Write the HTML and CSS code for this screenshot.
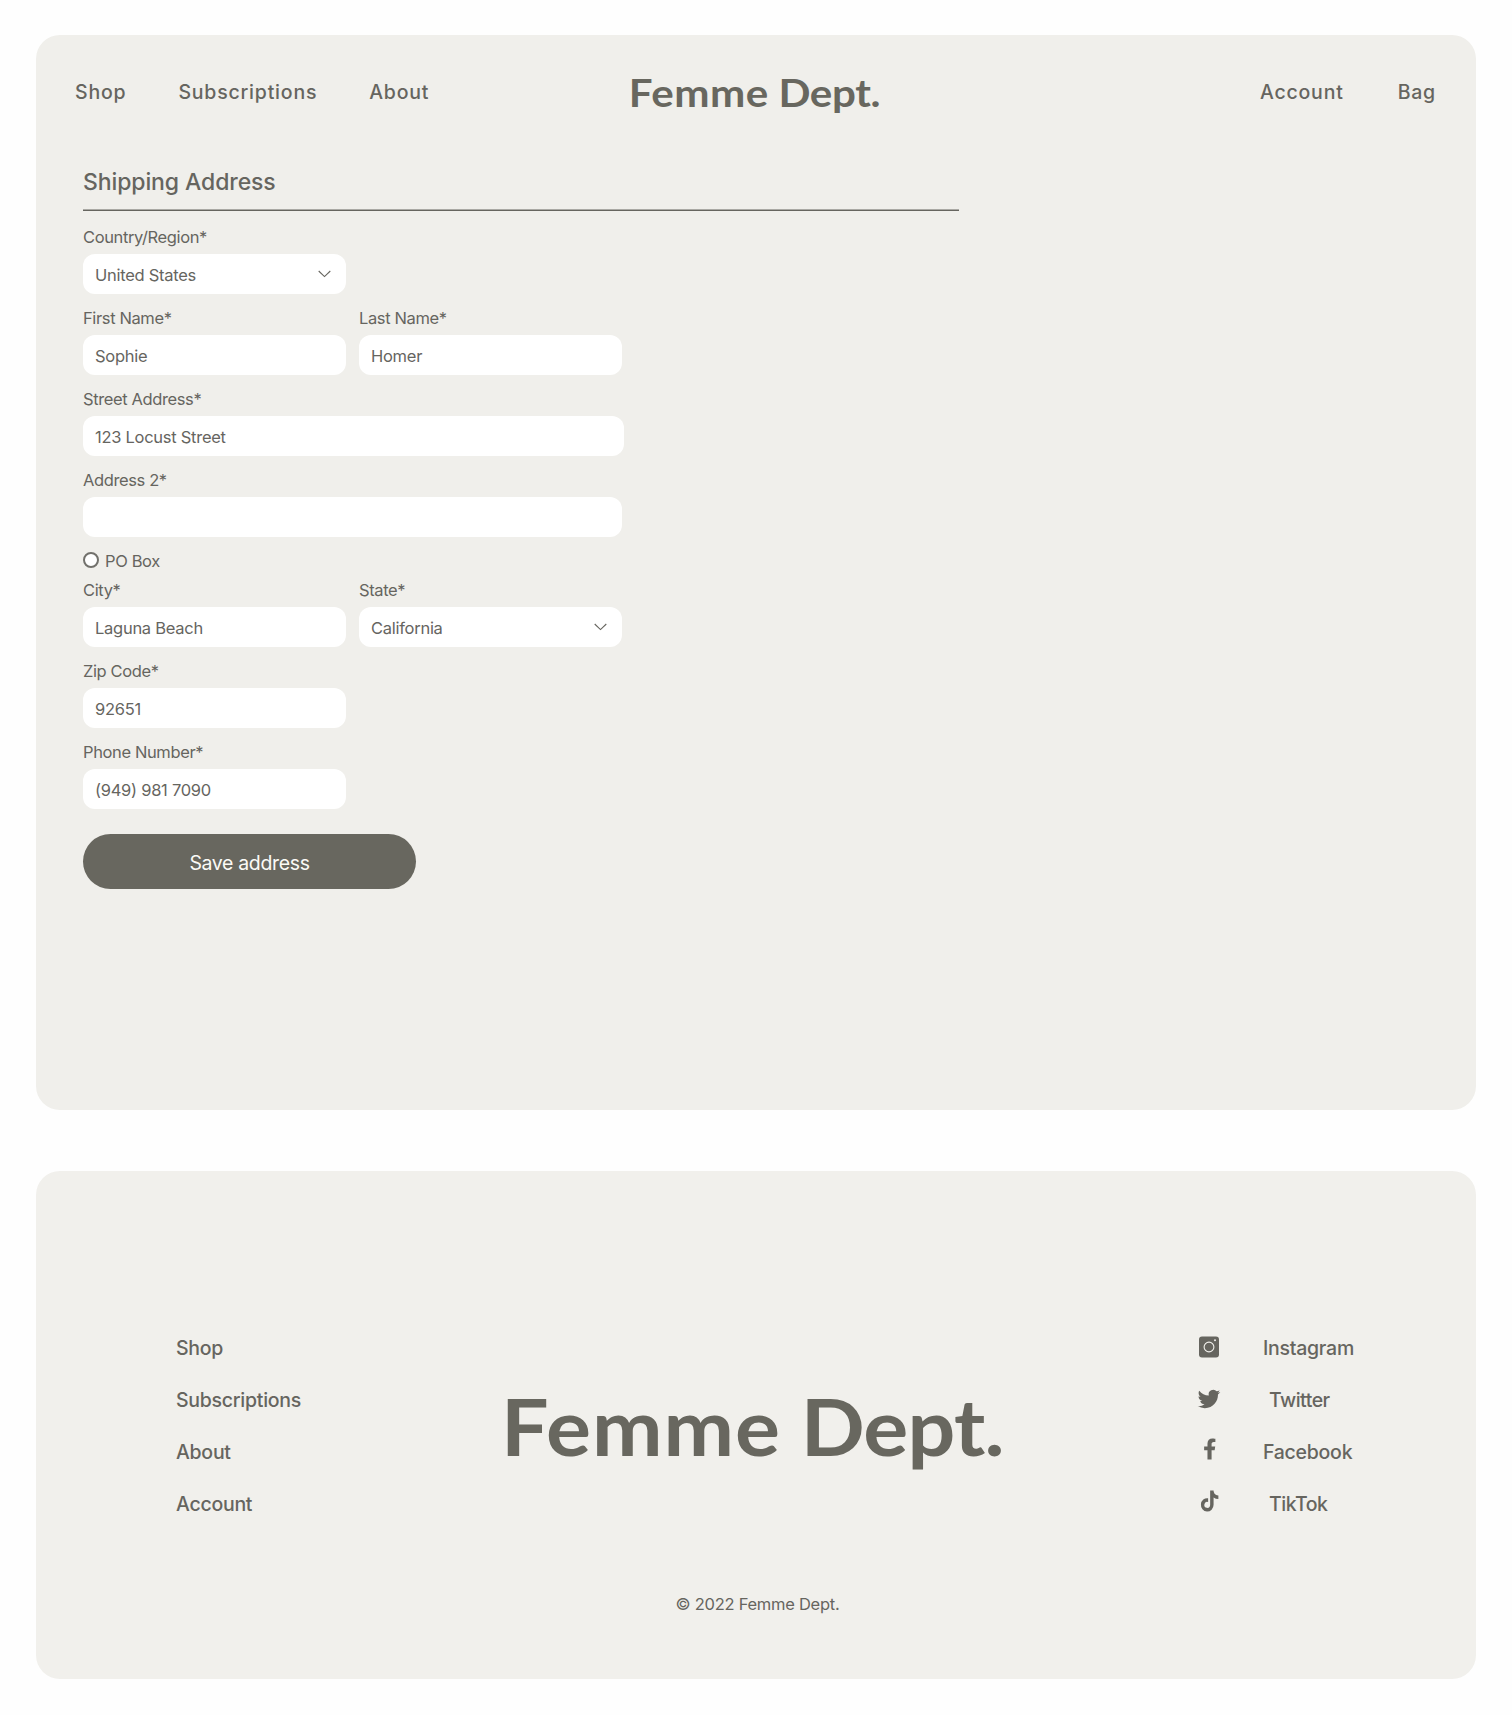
FILE: index.html
```html
<!DOCTYPE html>
<html lang="en">
<head>
<meta charset="utf-8">
<title>Femme Dept. – Shipping Address</title>
<link rel="stylesheet" href="styles.css">
</head>
<body>
<main class="panel">
  <header class="header">
    <nav class="nav"><a>Shop</a><a>Subscriptions</a><a>About</a></nav>
    <div class="logo"><span class="logo-wide">Femme</span> <span>Dept.</span></div>
    <nav class="nav nav-end"><a>Account</a><a>Bag</a></nav>
  </header>
  <form class="form">
    <h1 class="title">Shipping Address</h1>
    <div class="row">
      <label class="field">Country/Region*
        <span class="select"><select class="input"><option>United States</option></select><svg class="chevron" viewBox="0 0 13 8"><path d="M.7 1 6.5 6.6 12.3 1"/></svg></span>
      </label>
    </div>
    <div class="row">
      <label class="field">First Name*<input class="input" value="Sophie"></label>
      <label class="field">Last Name*<input class="input" value="Homer"></label>
    </div>
    <label class="field field-street">Street Address*<input class="input" value="123 Locust Street"></label>
    <label class="field field-wide">Address 2*<input class="input" value=""></label>
    <label class="radio"><input class="radio-dot" type="radio">PO Box</label>
    <div class="row">
      <label class="field">City*<input class="input" value="Laguna Beach"></label>
      <label class="field">State*
        <span class="select"><select class="input"><option>California</option></select><svg class="chevron" viewBox="0 0 13 8"><path d="M.7 1 6.5 6.6 12.3 1"/></svg></span>
      </label>
    </div>
    <label class="field">Zip Code*<input class="input" value="92651"></label>
    <label class="field">Phone Number*<input class="input" value="(949) 981 7090"></label>
    <button class="save" type="button">Save address</button>
  </form>
</main>
<footer class="panel footer">
  <div class="footer-main">
    <nav class="links"><a>Shop</a><a>Subscriptions</a><a>About</a><a>Account</a></nav>
    <div class="logo logo-large"><span class="logo-wide">Femme</span> <span>Dept.</span></div>
    <nav class="links social">
      <a><svg class="icon" viewBox="0 0 24 24"><rect x="2" y="1.5" width="20" height="21" rx="3"/><circle class="lens" cx="12" cy="12" r="4.9"/><circle class="flash" cx="18" cy="5.3" r="1"/></svg>Instagram</a>
      <a class="inset"><svg class="icon" viewBox="0 0 24 24"><path transform="translate(.7 .7) scale(.94)" d="M23.953 4.57a10 10 0 0 1-2.825.775 4.958 4.958 0 0 0 2.163-2.723c-.951.555-2.005.959-3.127 1.184a4.92 4.92 0 0 0-8.384 4.482C7.69 8.095 4.067 6.13 1.64 3.162a4.822 4.822 0 0 0-.666 2.475c0 1.71.87 3.213 2.188 4.096a4.904 4.904 0 0 1-2.228-.616v.06a4.923 4.923 0 0 0 3.946 4.827 4.996 4.996 0 0 1-2.212.085 4.936 4.936 0 0 0 4.604 3.417 9.867 9.867 0 0 1-6.102 2.105c-.39 0-.779-.023-1.17-.067a13.995 13.995 0 0 0 7.557 2.209c9.053 0 13.998-7.496 13.998-13.985 0-.21 0-.42-.015-.63A9.935 9.935 0 0 0 24 4.59z"/></svg>Twitter</a>
      <a><svg class="icon icon-up" viewBox="0 0 24 24"><path transform="translate(6.2 1.5) scale(.041)" d="M279.14 288l14.22-92.66h-88.91v-60.13c0-25.35 12.42-50.06 52.24-50.06h40.42V6.26S260.43 0 225.36 0c-73.22 0-121.08 44.38-121.08 124.72v70.62H22.89V288h81.39v224h100.17V288z"/></svg>Facebook</a>
      <a class="inset"><svg class="icon icon-up" viewBox="0 0 24 24"><path transform="translate(3.9 1.5) scale(.039 .041)" d="M448 209.91a210.06 210.06 0 0 1-122.77-39.25v178.72A162.55 162.55 0 1 1 185 188.31v89.89a74.62 74.62 0 1 0 52.23 71.18V0h88a121.18 121.18 0 0 0 1.86 22.17A122.18 122.18 0 0 0 381 102.39a121.43 121.43 0 0 0 67 20.14z"/></svg>TikTok</a>
    </nav>
  </div>
  <p class="copyright">© 2022 Femme Dept.</p>
</footer>
</body>
</html>
```

FILE: styles.css
```css
* { box-sizing: border-box; }

body {
  margin: 0;
  padding: 35px 36px 36px;
  background: #fefefe;
  color: #66655f;
  font-family: Inter, sans-serif;
}

.panel {
  height: 1075px;
  border-radius: 24px;
  background: #f0efeb;
}

.header {
  display: grid;
  grid-template-columns: 1fr auto 1fr;
  align-items: center;
  height: 114px;
  padding: 0 40px 0 39px;
}

.nav {
  display: flex;
  gap: 52px;
  font-size: 19.5px;
  font-weight: 500;
  letter-spacing: 0.8px;
}

.nav-end {
  justify-content: flex-end;
  gap: 54px;
}

.logo {
  margin-right: 2px;
  color: #68675f;
  font: 700 39px/46px Lato, sans-serif;
  letter-spacing: -0.01em;
  white-space: nowrap;
  transform: scaleX(1.08);
}

.logo-wide { letter-spacing: 0.012em; }

.form {
  display: flex;
  flex-direction: column;
  align-items: flex-start;
  gap: 13px;
  padding: 6px 0 0 47px;
  font-size: 16.5px;
  letter-spacing: -0.38px;
}

.title {
  width: 876px;
  margin: 0 0 2px;
  padding-bottom: 1px;
  border-bottom: 1px solid #66655f;
  box-shadow: inset 0 -1px #aaa9a4;
  font-size: 23px;
  font-weight: 500;
  line-height: 54px;
  letter-spacing: -0.1px;
}

.row {
  display: flex;
  gap: 13px;
}

.field {
  display: flex;
  flex-direction: column;
  gap: 6px;
  width: 263px;
  line-height: 22px;
}

.field-street { width: 540.5px; }
.field-wide { width: 539px; }

.input {
  display: block;
  width: 100%;
  height: 40px;
  padding: 2px 12px 0;
  border: 0;
  border-radius: 12px;
  background: #fff;
  color: inherit;
  font: inherit;
  letter-spacing: -0.27px;
  appearance: none;
}

.select {
  display: grid;
  align-items: center;
}

.select > * { grid-area: 1 / 1; }

.chevron {
  justify-self: end;
  width: 13px;
  height: 8px;
  margin: 0 15px 1px 0;
  fill: none;
  stroke: #66655f;
  stroke-width: 1.1;
  pointer-events: none;
}

.radio {
  display: flex;
  align-items: center;
  gap: 6px;
  margin-bottom: -6px;
  line-height: 22px;
}

.radio-dot {
  width: 16px;
  height: 16px;
  margin: 0 0 2px;
  border: 2px solid #72716c;
  border-radius: 50%;
  background: #fff;
  appearance: none;
}

.save {
  width: 333px;
  height: 55px;
  margin-top: 12px;
  padding: 3px 0 0;
  border: 0;
  border-radius: 28px;
  background: #68675f;
  color: #fbfaf6;
  font: 400 19.5px Inter, sans-serif;
  letter-spacing: -0.35px;
}

.footer {
  height: 508px;
  margin-top: 61px;
  padding-top: 151px;
  background: #f1f0ec;
}

.footer-main {
  display: grid;
  grid-template-columns: 325px 695.5px 1fr;
  align-items: center;
  padding-left: 140px;
}

.links {
  display: grid;
  grid-auto-rows: 52px;
  font-size: 19.5px;
  font-weight: 500;
  letter-spacing: -0.26px;
}

.links a {
  display: flex;
  align-items: center;
}

.logo-large {
  font-size: 78px;
  line-height: 94px;
  transform-origin: left;
}

.social a { gap: 42.5px; }

.social .inset {
  gap: 48.5px;
  letter-spacing: -0.5px;
}

.icon {
  width: 24px;
  height: 24px;
  margin-bottom: 3px;
  fill: #66655f;
}

.icon-up { margin-bottom: 7px; }

.lens {
  fill: none;
  stroke: #f1f0ec;
  stroke-width: 1.1;
}

.flash { fill: #f1f0ec; }

.copyright {
  margin: 63px 0 0 3px;
  font-size: 16.5px;
  line-height: 22px;
  letter-spacing: -0.26px;
  text-align: center;
}
```
